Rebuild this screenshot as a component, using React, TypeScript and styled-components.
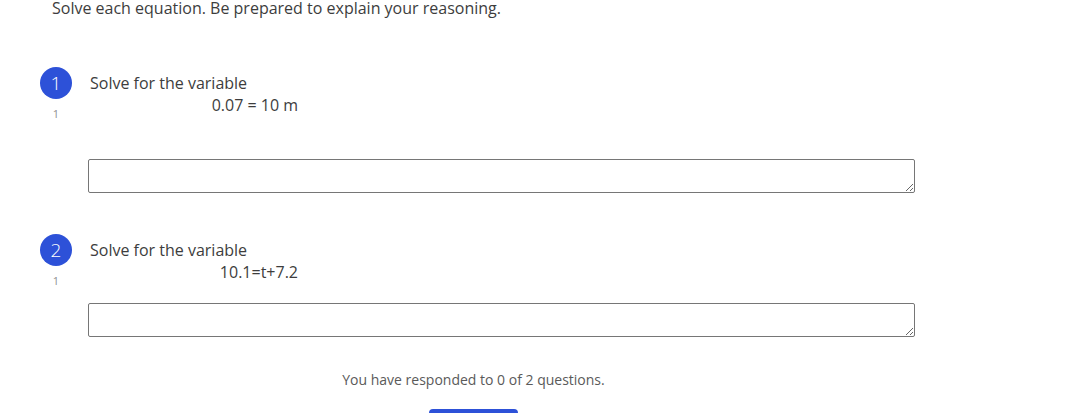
import React from 'react';
import styled, { createGlobalStyle } from 'styled-components';

const GlobalStyle = createGlobalStyle`
  html, body {
    margin: 0;
    padding: 0;
    background: #fff;
    overflow: hidden;
  }
  body {
    font-family: 'Open Sans', 'Liberation Sans', sans-serif;
    color: #3d3d3d;
    -webkit-font-smoothing: antialiased;
  }
`;

const Page = styled.div`
  width: 947px;
  margin-top: -4px;
`;

const Intro = styled.p`
  margin: 0;
  padding-left: 52px;
  font-size: 16px;
  line-height: 24px;
`;

const QuestionList = styled.div`
  display: flex;
  flex-direction: column;
  padding-left: 40px;
`;

const QuestionRow = styled.div<{ $top: number }>`
  display: grid;
  grid-template-columns: 32px 827px;
  column-gap: 16px;
  margin-top: ${(p) => p.$top}px;
`;

const Marker = styled.div`
  display: flex;
  flex-direction: column;
  align-items: center;
`;

const Badge = styled.span`
  width: 32px;
  height: 32px;
  border-radius: 50%;
  background: #2d51d8;
  color: #fff;
  font-size: 19px;
  font-weight: 300;
  display: flex;
  align-items: center;
  justify-content: center;
`;

const Points = styled.span`
  margin-top: 8px;
  font-size: 11px;
  line-height: 14px;
  color: #8f8f8f;
`;

const Body = styled.div`
  display: flex;
  flex-direction: column;
`;

const Prompt = styled.div`
  margin-top: 5px;
  padding-left: 2px;
  font-size: 16px;
  line-height: 22px;
`;

const Equation = styled.div`
  width: 210px;
  text-align: right;
  font-size: 16px;
  line-height: 23px;
`;

const Answer = styled.textarea<{ $gap: number }>`
  box-sizing: border-box;
  display: block;
  width: 827px;
  height: 34px;
  margin: ${(p) => p.$gap}px 0 0;
  border: 1px solid #767676;
  border-radius: 2px;
  font-family: inherit;
`;

const Footer = styled.div`
  display: flex;
  flex-direction: column;
  align-items: center;
  margin-top: 33px;
`;

const Status = styled.p`
  margin: 0;
  font-size: 14px;
  line-height: 20px;
  color: #5a5a5a;
`;

const SubmitButton = styled.button`
  margin-top: 19px;
  width: 89px;
  height: 36px;
  border: none;
  border-radius: 4px;
  background: #2d51d8;
  color: #fff;
  font-family: inherit;
  font-size: 14px;
`;

const questions = [
  { n: 1, equation: '0.07 = 10 m', top: 47, gap: 42 },
  { n: 2, equation: '10.1=t+7.2', top: 41, gap: 19 },
];

const App = () => (
  <>
    <GlobalStyle />
    <Page>
      <Intro>Solve each equation. Be prepared to explain your reasoning.</Intro>
      <QuestionList>
        {questions.map((q) => (
          <QuestionRow key={q.n} $top={q.top}>
            <Marker>
              <Badge>{q.n}</Badge>
              <Points>1</Points>
            </Marker>
            <Body>
              <Prompt>Solve for the variable</Prompt>
              <Equation>{q.equation}</Equation>
              <Answer $gap={q.gap} />
            </Body>
          </QuestionRow>
        ))}
      </QuestionList>
      <Footer>
        <Status>You have responded to 0 of 2 questions.</Status>
        <SubmitButton>Submit</SubmitButton>
      </Footer>
    </Page>
  </>
);

export default App;
